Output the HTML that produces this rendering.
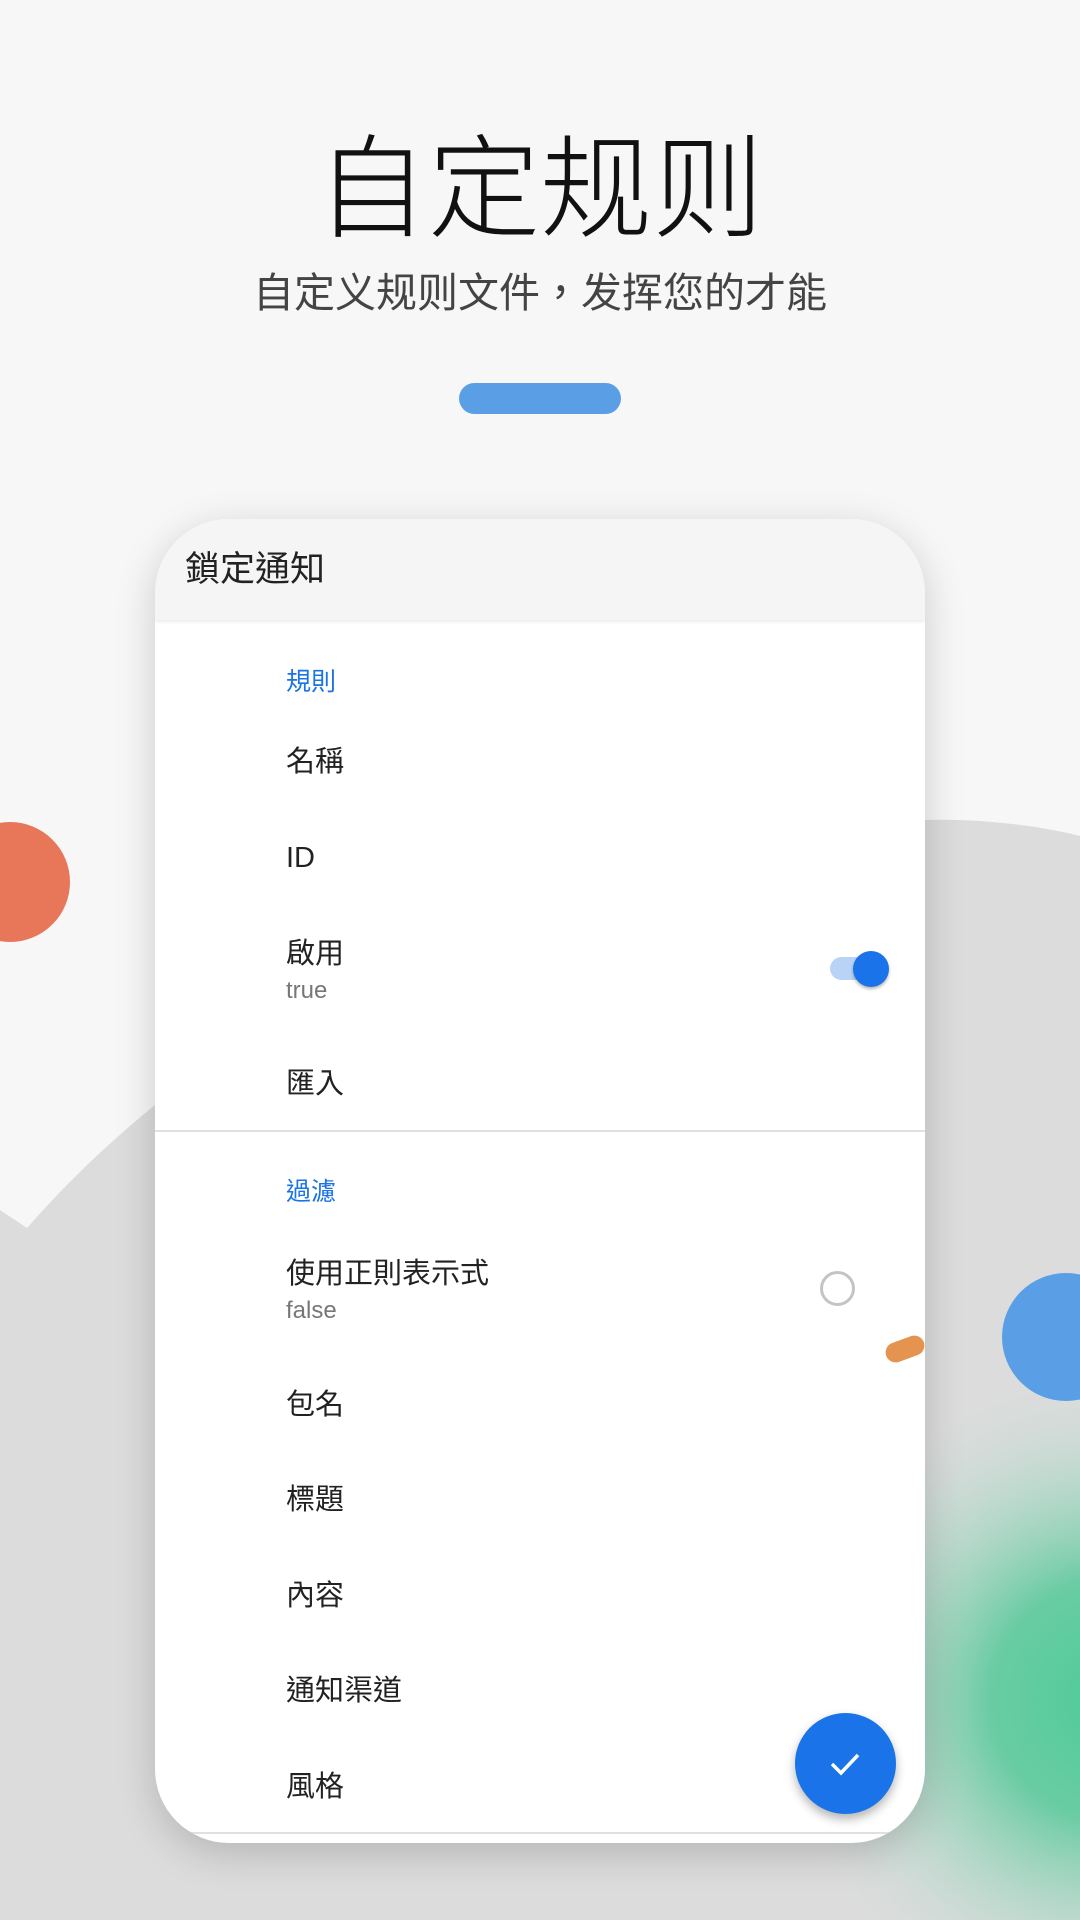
<!DOCTYPE html>
<html style="width:1080px;height:1920px;overflow:hidden"><head><meta charset="utf-8"><style>
*{margin:0;padding:0;box-sizing:border-box}
body{width:1080px;height:1920px;overflow:hidden;background:#f7f7f7;position:relative;font-family:"Liberation Sans","Noto Sans CJK TC",sans-serif}
.abs{position:absolute}
.t{position:absolute;left:131px;font-size:29px;color:#222;line-height:1}
.s{position:absolute;left:131px;font-size:24px;color:#777;line-height:1}
.h{position:absolute;left:131px;font-size:25px;color:#1a73e8;line-height:1}
</style></head><body>
<svg class="abs" style="left:0;top:0;display:block" width="1080" height="1920">
<defs><radialGradient id="g" cx="0.5" cy="0.5" r="0.5"><stop offset="0" stop-color="#4ecb98"/><stop offset="0.35" stop-color="#55c998" stop-opacity="0.85"/><stop offset="0.7" stop-color="#9fd6c0" stop-opacity="0.4"/><stop offset="1" stop-color="#dcdcdc" stop-opacity="0"/></radialGradient></defs>
<path d="M27 1228 C 200 1030, 500 850, 925 820 C 980 818, 1040 826, 1080 836 L1080 1920 L0 1920 L0 1210 Z" fill="#dcdcdc"/>
<circle cx="1110" cy="1700" r="340" fill="url(#g)"/>
<circle cx="10" cy="882" r="60" fill="#e8775a"/>
<circle cx="1066" cy="1337" r="64" fill="#5a9fe6"/>
</svg>
<div class="abs" style="left:0;width:1080px;top:134px;text-align:center;font-size:112px;color:#111;line-height:1;font-weight:300">自定规则</div>
<div class="abs" style="left:0;width:1080px;top:273px;text-align:center;font-size:41px;color:#444;line-height:1">自定义规则文件，发挥您的才能</div>
<div class="abs" style="left:459px;top:383px;width:162px;height:31px;border-radius:16px;background:#5a9fe6"></div>
<div class="abs" style="left:155px;top:519px;width:770px;height:1324px;border-radius:74px;background:#fff;overflow:hidden;box-shadow:0 10px 40px rgba(0,0,0,.18)">
 <div class="abs" style="left:0;top:0;width:770px;height:101px;background:#f5f5f5;box-shadow:0 2px 3px rgba(0,0,0,.08)"></div>
 <div class="abs" style="left:30px;top:33px;font-size:35px;color:#222;line-height:1">鎖定通知</div>
 <div class="h" style="top:151px">規則</div>
 <div class="t" style="top:229px">名稱</div>
 <div class="t" style="top:325px">ID</div>
 <div class="t" style="top:421px">啟用</div>
 <div class="s" style="top:460px">true</div>
 <div class="abs" style="left:675px;top:438px;width:52px;height:23px;border-radius:12px;background:#b9d3f7"></div>
 <div class="abs" style="left:698px;top:432px;width:36px;height:36px;border-radius:50%;background:#1a73e8;box-shadow:0 2px 3px rgba(0,0,0,.3)"></div>
 <div class="t" style="top:551px">匯入</div>
 <div class="abs" style="left:0;top:611px;width:770px;height:2px;background:#e0e0e0"></div>
 <div class="h" style="top:661px">過濾</div>
 <div class="t" style="top:741px">使用正則表示式</div>
 <div class="s" style="top:780px">false</div>
 <div class="abs" style="left:665px;top:752px;width:35px;height:35px;border-radius:50%;border:3px solid #c4c4c4"></div>
 <div class="abs" style="left:730px;top:820px;width:40px;height:20px;border-radius:10px;background:#e5944f;transform:rotate(-20deg)"></div>
 <div class="t" style="top:872px">包名</div>
 <div class="t" style="top:967px">標題</div>
 <div class="t" style="top:1063px">內容</div>
 <div class="t" style="top:1158px">通知渠道</div>
 <div class="t" style="top:1254px">風格</div>
 <div class="abs" style="left:0;top:1313px;width:770px;height:2px;background:#e0e0e0"></div>
 <div class="abs" style="left:640px;top:1194px;width:101px;height:101px;border-radius:50%;background:#1a73e8;box-shadow:0 5px 10px rgba(0,0,0,.3)"></div>
 <svg class="abs" style="left:670px;top:1224px" width="40" height="40"><path d="M7 21 L16 30 L33 12" stroke="#fff" stroke-width="3.5" fill="none"/></svg>
</div>
</body></html>
